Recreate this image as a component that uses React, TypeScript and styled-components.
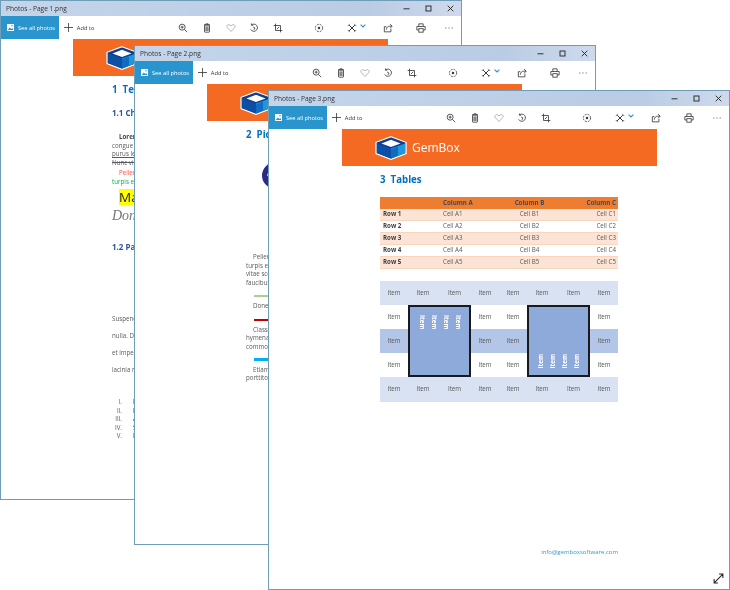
import React from "react";
import styled, { createGlobalStyle } from "styled-components";

const Global = createGlobalStyle`
  html, body { margin: 0; padding: 0; background: #fff; }
  body { font-family: "Open Sans", "Noto Sans", sans-serif; }
  #root { width: 730px; height: 590px; }
`;

const Desktop = styled.div`
  position: relative;
  width: 730px;
  height: 590px;
  overflow: hidden;
  background: #fff;
  filter: blur(0.25px);
`;

const Frame = styled.section<{ $left: number; $top: number }>`
  position: absolute;
  left: ${(p) => p.$left}px;
  top: ${(p) => p.$top}px;
  width: 462px;
  height: 500px;
  box-sizing: border-box;
  border: 1px solid #6f9db8;
  background: #fff;
  overflow: hidden;
  display: flex;
  flex-direction: column;
`;

const TitleBar = styled.header`
  flex: none;
  height: 15px;
  display: flex;
  align-items: center;
  padding-left: 5px;
  background: linear-gradient(90deg, #c4d5ea 0%, #bccfe6 55%, #b9cce4 80%, #cfd9ec 100%);
`;

const TitleText = styled.span`
  flex: 1;
  font-size: 6.6px;
  color: #333;
  white-space: nowrap;
`;

const WinButton = styled.span`
  width: 22px;
  height: 15px;
  display: flex;
  align-items: center;
  justify-content: center;
  color: #222;
`;

const Toolbar = styled.div`
  flex: none;
  height: 23px;
  display: flex;
  align-items: center;
  background: #fff;
`;

const SeeAll = styled.div`
  width: 58px;
  height: 23px;
  display: flex;
  align-items: center;
  gap: 4px;
  padding-left: 6px;
  box-sizing: border-box;
  background: #2a94cc;
  color: #fff;
  font-size: 5.7px;
  white-space: nowrap;
`;

const AddTo = styled.div`
  width: 40px;
  height: 23px;
  display: flex;
  align-items: center;
  gap: 4px;
  padding-left: 5px;
  box-sizing: border-box;
  color: #333;
  font-size: 5.7px;
  white-space: nowrap;
`;

const Tool = styled.span<{ $gap: number }>`
  position: relative;
  width: 24px;
  height: 23px;
  margin-left: ${(p) => p.$gap}px;
  display: flex;
  align-items: center;
  justify-content: center;
  color: #3a3a3a;
`;

const Chevron = styled.svg`
  position: absolute;
  right: -2px;
  top: 8px;
  color: #2a94cc;
`;

const Page = styled.div`
  flex: 1;
  min-height: 0;
  overflow: hidden;
`;

const Banner = styled.div<{ $inset: number }>`
  width: 315px;
  height: 37px;
  margin-left: ${(p) => p.$inset}px;
  padding-left: 33px;
  box-sizing: border-box;
  display: flex;
  align-items: center;
  gap: 5px;
  background: #f56a23;
  color: #fff;
  font-size: 12px;
`;

const Sheet = styled.div`
  width: 238px;
  margin-left: 111px;
`;

const H1 = styled.h1`
  margin: 7px 0 0;
  font-size: 9.7px;
  line-height: 14px;
  font-weight: 700;
  color: #0070c0;
  white-space: pre;
`;

const H2 = styled.h2<{ $mt: number }>`
  margin: ${(p) => p.$mt}px 0 0;
  font-size: 8px;
  line-height: 10px;
  font-weight: 700;
  color: #2f5496;
  white-space: nowrap;
`;

const Para = styled.p<{ $mt: number }>`
  margin: ${(p) => p.$mt}px 0 0;
  width: 238px;
  font-size: 6.2px;
  line-height: 8.5px;
  color: #595959;
`;

const Row = styled.span<{ $indent?: boolean; $color?: string }>`
  display: block;
  white-space: nowrap;
  padding-left: ${(p) => (p.$indent ? 7 : 0)}px;
  color: ${(p) => p.$color ?? "inherit"};
`;

const Strong = styled.b`
  color: #404040;
`;

const Underlined = styled.span`
  text-decoration: underline;
`;

const Struck = styled.span`
  text-decoration: line-through;
`;

const Highlight = styled.div`
  margin: 2.5px 0 0 7px;
  width: max-content;
  background: #ffff00;
  color: #222;
  font-size: 13.5px;
  line-height: 16px;
  white-space: nowrap;
`;

const ScriptLine = styled.div`
  margin-top: 4px;
  font-family: "Liberation Serif", serif;
  font-style: italic;
  font-size: 14px;
  line-height: 14px;
  color: #777;
  white-space: nowrap;
`;

const Spaced = styled.p<{ $mt?: number }>`
  margin: ${(p) => p.$mt ?? 0}px 0 0;
  font-size: 6.2px;
  line-height: 17px;
  color: #595959;
  white-space: nowrap;
`;

const RomanList = styled.ol`
  margin: 20px 0 0;
  padding: 0;
  list-style: none;
`;

const RomanItem = styled.li`
  display: flex;
  font-size: 6.2px;
  line-height: 8.4px;
  color: #595959;
  white-space: nowrap;
`;

const RomanMark = styled.span`
  width: 10px;
  text-align: right;
  margin-right: 11px;
`;

const RomanBody = styled.span`
  color: #333;
`;

const Picture = styled.svg`
  display: block;
  margin: 20px 0 0 16px;
`;

const Rule = styled.div<{ $color: string; $mt: number; $h: number }>`
  margin: ${(p) => p.$mt}px 0 0 8px;
  width: 200px;
  height: ${(p) => p.$h}px;
  background: ${(p) => p.$color};
`;

const DataTable = styled.table`
  margin-top: 10px;
  width: 238px;
  table-layout: fixed;
  border-collapse: separate;
  border-spacing: 0;
  font-size: 6.2px;
  color: #595959;
`;

const HeadRow = styled.tr`
  background: #ed7d31;
  color: #3b4a66;
  font-weight: 700;
`;

const BodyRow = styled.tr<{ $odd: boolean }>`
  background: ${(p) => (p.$odd ? "#fbe4d5" : "#fff")};
  td {
    border-bottom: 1px solid #f9d5bd;
  }
`;

const Cell = styled.td<{ $align: string }>`
  box-sizing: border-box;
  height: 12px;
  padding: 0 2px 1px 3px;
  text-align: ${(p) => p.$align};
  white-space: nowrap;
  line-height: 10px;
`;

const RowHead = styled(Cell)`
  font-weight: 700;
  color: #404040;
`;

const ItemGrid = styled.div`
  margin-top: 12px;
  width: 238px;
  display: grid;
  grid-template-columns: 28px 30px 33px 28px 28px 30px 33px 28px;
  grid-template-rows: 24px 24px 24px 24px 25px;
`;

const Item = styled.div<{ $band: string }>`
  display: flex;
  align-items: center;
  justify-content: center;
  padding-bottom: 2px;
  font-size: 6.2px;
  color: #595959;
  background: ${(p) => p.$band};
`;

const Merged = styled.div<{ $col: string; $end: boolean }>`
  grid-column: ${(p) => p.$col};
  grid-row: 2 / 5;
  box-sizing: border-box;
  border: 2px solid #1a1a1a;
  background: #8eaadb;
  display: flex;
  justify-content: center;
  gap: 4px;
  align-items: ${(p) => (p.$end ? "flex-end" : "flex-start")};
  padding: ${(p) => (p.$end ? "0 0 7px" : "8px 0 0")};
`;

const VItem = styled.span<{ $flip: boolean }>`
  writing-mode: vertical-rl;
  transform: ${(p) => (p.$flip ? "rotate(180deg)" : "none")};
  width: 8px;
  font-size: 6.2px;
  line-height: 8px;
  color: #fff;
  font-weight: 700;
`;

const Email = styled.div`
  margin-top: 146px;
  text-align: right;
  font-size: 6px;
  line-height: 8px;
  color: #2e9ad6;
`;

const Expand = styled.svg`
  position: absolute;
  right: 6px;
  bottom: 6px;
  color: #222;
`;

type IconProps = { children: React.ReactNode; color?: string };

const Ico = ({ children, color }: IconProps) => (
  <svg width="10" height="10" viewBox="0 0 12 12" fill="none" stroke={color ?? "currentColor"} strokeWidth="1">
    {children}
  </svg>
);

const tools: { gap: number; color?: string; body: React.ReactNode; chevron?: boolean }[] = [
  {
    gap: 72,
    body: (
      <>
        <circle cx="5" cy="5" r="3.6" />
        <path d="M3.2 5h3.6M5 3.2v3.6M7.7 7.7 11 11" />
      </>
    ),
  },
  {
    gap: 0,
    body: (
      <>
        <path d="M2.4 2.2h7.2M4.6 2.2V1h2.8v1.2" />
        <rect x="3" y="2.4" width="6" height="8.6" rx="0.6" />
        <path d="M4.9 4v5.6M7.1 4v5.6" strokeWidth="1.2" />
      </>
    ),
  },
  {
    gap: 0,
    color: "#a8a8a8",
    body: <path d="M6 10.2 1.6 5.6C.4 4.2 1.2 2 3.3 2c1.2 0 2.1.7 2.7 1.6C6.6 2.7 7.5 2 8.7 2c2.1 0 2.9 2.2 1.7 3.6Z" />,
  },
  {
    gap: 0,
    body: (
      <>
        <path d="M3 2.4A4.3 4.3 0 1 1 2 7.6M2.9 .6 3 2.6l2 .1" />
        <path d="M5 4.8 7.2 6 6 8.2" />
      </>
    ),
  },
  {
    gap: 0,
    body: <path d="M3 .8V9h8.2M.8 3H9v8.2M4.6 7.4 7.4 4.6" />,
  },
  {
    gap: 17,
    body: (
      <>
        <circle cx="6" cy="6" r="4.4" strokeDasharray="2.2 1.3" />
        <circle cx="6" cy="6" r="1.5" fill="currentColor" stroke="none" />
      </>
    ),
  },
  {
    gap: 9,
    chevron: true,
    body: (
      <>
        <path d="M2.6 2.6 9.6 9.6M9.4 2.6 2.4 9.6" strokeWidth="1.2" />
        <path d="M1 3.6 3.4 1M8.6 11 11 8.4M8.6 1 11 3.6M1 8.4 3.4 11" strokeWidth="0.8" />
      </>
    ),
  },
  {
    gap: 12,
    body: <path d="M9.5 6.8V10.6H1.6V4.4H4M4 8c0-2.6 1.8-4.2 4.2-4.2H10.8M8.6 1.4 11 3.8 8.6 6.2" />,
  },
  {
    gap: 9,
    body: (
      <>
        <path d="M3.4 4V1h5.2v3M3.2 8.4H1V4.2h10v4.2H8.8" />
        <rect x="3.4" y="6.8" width="5.2" height="4.2" />
      </>
    ),
  },
  {
    gap: 4,
    color: "#555",
    body: <path d="M1.6 6h1.2M5.4 6h1.2M9.2 6h1.2" strokeWidth="1.2" />,
  },
];

const Logo = () => (
  <svg width="32" height="24" viewBox="0 0 32 24">
    <path d="M16 .7 31 6.3v11.2L16 23.3 1 17.5V6.3Z" fill="#0b3f8f" stroke="#fff" strokeWidth="1.2" />
    <path d="M16 12.6V22.4L30 17V7.4Z" fill="#1d98dc" />
    <path d="M16 13.4V22.4L23 19.6V10.6Z" fill="#0f6cc0" />
    <path d="M2 7.4 16 12.6V22.4L2 17Z" fill="#0b4fa6" />
    <path d="M16 3.8 25.6 7.6 16 11 6.4 7.6Z" fill="#fff" />
  </svg>
);

type WindowProps = {
  left: number;
  top: number;
  name: string;
  inset: number;
  brand?: boolean;
  children: React.ReactNode;
};

const PhotoWindow = ({ left, top, name, inset, brand, children }: WindowProps) => (
  <Frame $left={left} $top={top}>
    <TitleBar>
      <TitleText>Photos - {name}</TitleText>
      <WinButton>
        <svg width="7" height="7" viewBox="0 0 7 7" stroke="currentColor" strokeWidth="0.9">
          <path d="M.5 3.8h6" />
        </svg>
      </WinButton>
      <WinButton>
        <svg width="7" height="7" viewBox="0 0 7 7" fill="none" stroke="currentColor" strokeWidth="0.9">
          <rect x="1" y="1" width="5" height="5" />
        </svg>
      </WinButton>
      <WinButton>
        <svg width="7" height="7" viewBox="0 0 7 7" stroke="currentColor" strokeWidth="0.9">
          <path d="M.7.7l5.6 5.6M6.3.7.7 6.3" />
        </svg>
      </WinButton>
    </TitleBar>
    <Toolbar>
      <SeeAll>
        <svg width="7" height="7" viewBox="0 0 7 7">
          <rect x="0" y="0" width="7" height="7" fill="#fff" />
          <path d="M.7 6 2.8 3.4l1.5 1.5 1-1L6.4 6Z" fill="#2a94cc" />
          <circle cx="5" cy="1.8" r="0.7" fill="#2a94cc" />
        </svg>
        See all photos
      </SeeAll>
      <AddTo>
        <svg width="9" height="9" viewBox="0 0 9 9" stroke="currentColor" strokeWidth="0.8">
          <path d="M4.5 0v9M0 4.5h9" />
        </svg>
        Add to
      </AddTo>
      {tools.map((t, i) => (
        <Tool key={i} $gap={t.gap}>
          <Ico color={t.color}>{t.body}</Ico>
          {t.chevron && (
            <Chevron width="6" height="4" viewBox="0 0 6 4" fill="none" stroke="currentColor" strokeWidth="1.1">
              <path d="M.6.6 3 3 5.4.6" />
            </Chevron>
          )}
        </Tool>
      ))}
    </Toolbar>
    <Page>
      <Banner $inset={inset}>
        <Logo />
        {brand && "GemBox"}
      </Banner>
      <Sheet>{children}</Sheet>
    </Page>
  </Frame>
);

const cols = ["A", "B", "C"];
const rows = [1, 2, 3, 4, 5];
const colAlign = ["left", "center", "right"];

const itemKeys = [0, 1, 2, 3];

const band = { light: "#d9e2f3", mid: "#b4c6e7", none: "#fff" };

const fullRow = [0, 1, 2, 3, 4, 5, 6, 7];
const sideCols = [0, 3, 4, 7];

const ItemTable = () => (
  <ItemGrid>
    {fullRow.map((i) => (
      <Item key={`a${i}`} $band={band.light}>Item</Item>
    ))}
    <Item $band={band.none}>Item</Item>
    <Merged $col="2 / 4" $end={false}>
      {itemKeys.map((i) => (
        <VItem key={i} $flip={false}>Item</VItem>
      ))}
    </Merged>
    <Item $band={band.none}>Item</Item>
    <Item $band={band.none}>Item</Item>
    <Merged $col="6 / 8" $end={true}>
      {itemKeys.map((i) => (
        <VItem key={i} $flip={true}>Item</VItem>
      ))}
    </Merged>
    <Item $band={band.none}>Item</Item>
    {sideCols.map((i) => (
      <Item key={`c${i}`} $band={band.mid}>Item</Item>
    ))}
    {sideCols.map((i) => (
      <Item key={`d${i}`} $band={band.none}>Item</Item>
    ))}
    {fullRow.map((i) => (
      <Item key={`e${i}`} $band={band.light}>Item</Item>
    ))}
  </ItemGrid>
);

export default function App() {
  return (
    <>
      <Global />
      <Desktop>
        <PhotoWindow left={0} top={0} name="Page 1.png" inset={72}>
          <H1>{"1  Text"}</H1>
          <H2 $mt={11}>1.1 Character formatting</H2>
          <Para $mt={15}>
            <Row $indent><Strong>Lorem ipsum dolor sit amet, consectetur adipiscing elit.</Strong></Row>
            <Row>congue sapien vitae ligula dapibus, et aliquam neque</Row>
            <Row><Underlined>purus lectus, vitae ornare massa blandit</Underlined></Row>
            <Row><Struck>Nunc vitae velit ac nisl porta</Struck></Row>
          </Para>
          <Para $mt={2.2}>
            <Row $indent $color="#ff4d4d">Pellentesque habitant morbi tristique</Row>
            <Row $color="#00b050">turpis egestas, vestibulum tortor</Row>
          </Para>
          <Highlight>Mauris</Highlight>
          <ScriptLine>Donec</ScriptLine>
          <H2 $mt={19}>1.2 Paragraph formatting</H2>
          <Spaced $mt={58.8}>Suspendisse potenti</Spaced>
          <Spaced>nulla. Donec eget</Spaced>
          <Spaced>et imperdiet</Spaced>
          <Spaced>lacinia nunc</Spaced>
          <RomanList>
            {["I.", "II.", "III.", "IV.", "V."].map((m, i) => (
              <RomanItem key={m}>
                <RomanMark>{m}</RomanMark>
                <RomanBody>{["Integer", "Nam", "Aenean", "Sed", "Praesent"][i]}</RomanBody>
              </RomanItem>
            ))}
          </RomanList>
        </PhotoWindow>

        <PhotoWindow left={134} top={45} name="Page 2.png" inset={72}>
          <H1>{"2  Pictures"}</H1>
          <Picture width="30" height="27" viewBox="0 0 30 27">
            <ellipse cx="14" cy="13.5" rx="14" ry="13.5" fill="#2b2b86" />
            <circle cx="6.5" cy="13" r="1.4" fill="#dfe3f5" />
          </Picture>
          <Para $mt={64}>
            <Row $indent>Pellentesque habitant morbi</Row>
            <Row>turpis egestas, vestibulum</Row>
            <Row>vitae scelerisque</Row>
            <Row>faucibus orci</Row>
          </Para>
          <Rule $color="#a9d18e" $mt={8.2} $h={2} />
          <Para $mt={5}>
            <Row $indent>Donec</Row>
          </Para>
          <Rule $color="#c00000" $mt={8} $h={2} />
          <Para $mt={5}>
            <Row $indent>Class aptent</Row>
            <Row>hymenaeos</Row>
            <Row>commodo</Row>
          </Para>
          <Rule $color="#00b0f0" $mt={6.9} $h={3} />
          <Para $mt={4.5}>
            <Row $indent>Etiam</Row>
            <Row>porttitor</Row>
          </Para>
        </PhotoWindow>

        <PhotoWindow left={268} top={90} name="Page 3.png" inset={73} brand>
          <H1>{"3  Tables"}</H1>
          <DataTable>
            <colgroup>
              <col width="60" />
              <col width="53" />
              <col width="72" />
              <col width="53" />
            </colgroup>
            <thead>
              <HeadRow>
                <Cell $align="left" />
                {cols.map((c, i) => (
                  <Cell key={c} $align={colAlign[i]}>Column {c}</Cell>
                ))}
              </HeadRow>
            </thead>
            <tbody>
              {rows.map((r) => (
                <BodyRow key={r} $odd={r % 2 === 1}>
                  <RowHead $align="left">Row {r}</RowHead>
                  {cols.map((c, i) => (
                    <Cell key={c} $align={colAlign[i]}>Cell {c}{r}</Cell>
                  ))}
                </BodyRow>
              ))}
            </tbody>
          </DataTable>
          <ItemTable />
          <Email>info@gemboxsoftware.com</Email>
        </PhotoWindow>
        <Expand width="11" height="11" viewBox="0 0 12 12" fill="none" stroke="currentColor" strokeWidth="1.1">
          <path d="M1.5 10.5 10.5 1.5M6.6 1.2h4.2v4.2M1.2 6.6v4.2h4.2" />
        </Expand>
      </Desktop>
    </>
  );
}
